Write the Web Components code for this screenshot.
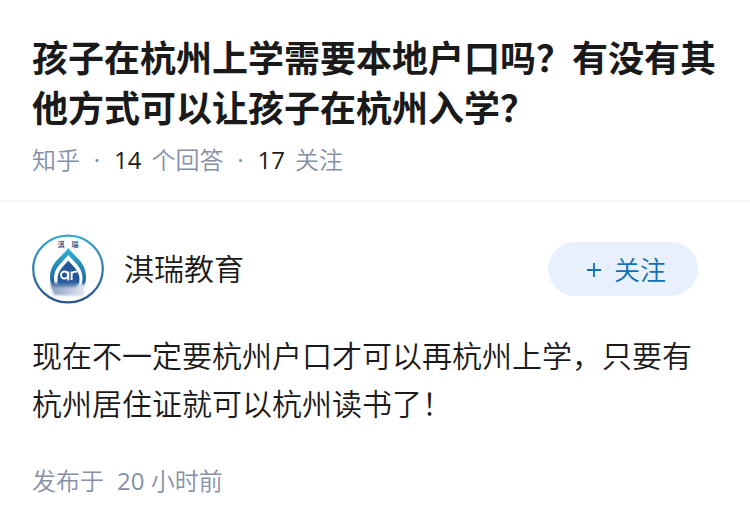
<!DOCTYPE html>
<html lang="zh-CN">
<head>
<meta charset="utf-8">
<meta name="viewport" content="width=device-width, initial-scale=1">
<title>知乎</title>
<style>
  body {
    margin: 0;
    background: #fff;
    color: #1a1a1a;
    font-family: "Open Sans", "Noto Sans CJK SC", sans-serif;
    font-weight: 350;
    --muted: #8590a6;
    --accent: #0f70b7;
    --gutter: 32px;
  }
  .count { font-weight: 400; }
</style>
</head>
<body>
<question-header answers="14" followers="17">
  孩子在杭州上学需要本地户口吗？有没有其他方式可以让孩子在杭州入学？
</question-header>
<answer-card>
  <author-bar slot="author" name="淇瑞教育"></author-bar>
  现在不一定要杭州户口才可以再杭州上学，只要有杭州居住证就可以杭州读书了！
  <span slot="time"><span class="count">20</span> 小时前</span>
</answer-card>

<script>
class QuestionHeader extends HTMLElement {
  constructor() {
    super();
    this.attachShadow({ mode: 'open' }).innerHTML = `
      <style>
        :host { display: block; padding: 31px var(--gutter) 23px; border-bottom: 2px solid #f6f6f6; }
        h1 { margin: 0; font: bold 36px/50px "Noto Sans CJK SC", sans-serif; }
        .meta { display: flex; gap: 10px; margin-top: 12px; font-size: 24px; line-height: 34px; color: var(--muted); }
        b { font-weight: 400; color: #1a1a1a; }
        .dot { width: 14px; text-align: center; font-weight: 400; }
      </style>
      <h1><slot></slot></h1>
      <div class="meta">
        <span>知乎</span><span class="dot">·</span>
        <b>${this.getAttribute('answers')}</b><span>个回答</span><span class="dot">·</span>
        <b>${this.getAttribute('followers')}</b><span>关注</span>
      </div>`;
  }
}

class BrandAvatar extends HTMLElement {
  constructor() {
    super();
    this.attachShadow({ mode: 'open' }).innerHTML = `
      <style>
        :host { display: block; flex: none; width: 72px; height: 70px; }
        svg { display: block; width: 100%; height: 100%; }
        text { font-family: "Noto Sans CJK SC", sans-serif; font-weight: bold; }
      </style>
      <svg viewBox="0 0 72 70" aria-hidden="true">
        <defs>
          <linearGradient id="ring" x1="0" y1="0" x2="0" y2="1">
            <stop offset="0" stop-color="#36a9cb"/><stop offset="1" stop-color="#29518d"/>
          </linearGradient>
          <linearGradient id="drop" x1="0" y1="0" x2="0" y2="1">
            <stop offset="0" stop-color="#2cb4d2"/><stop offset="1" stop-color="#1e5397"/>
          </linearGradient>
          <linearGradient id="haze" x1="0" y1="0" x2="1" y2="0">
            <stop offset="0" stop-color="#8a9fc2"/><stop offset=".5" stop-color="#b4c2d9"/><stop offset="1" stop-color="#e4e9f2"/>
          </linearGradient>
          <filter id="soft" x="-20%" y="-30%" width="140%" height="160%"><feGaussianBlur stdDeviation="1.3"/></filter>
        </defs>
        <ellipse cx="36" cy="35" rx="34.8" ry="33.4" fill="#fff" stroke="url(#ring)" stroke-width="2.2"/>
        <text x="25.5" y="13" font-size="7" fill="#315785">淇</text>
        <text x="39.5" y="13" font-size="7" fill="#315785">瑞</text>
        <path d="M36.3 14C31 22 18 28 18 43c0 6 2 10 5 13h26c3-3 5-7 5-13C54 28 42 22 36.3 14Z" fill="url(#drop)"/>
        <path d="M36.3 21C32 27 22 33 22 44c0 5 1 9 4 12h20c3-3 4.500-7 4.500-12C50.500 33 41 27 36.300 21Z" fill="#fff"/>
        <path d="M36.3 26.500C33 31 25.500 36 25.500 45c0 5 1 8 3 11h16c2-3 3-6 3-11C47.500 36 39.500 31 36.300 26.500Z" fill="#23599c"/>
        <circle cx="32.500" cy="41" r="3.500" fill="none" stroke="#fff" stroke-width="1.900"/>
        <path d="M36.300 37.500v9M39.600 46v-8.500M39.600 41c.3-3 3-4 5.400-3" fill="none" stroke="#fff" stroke-width="1.900"/>
        <path d="M18 50 53 50 52 62 22 61Z" fill="url(#haze)" filter="url(#soft)"/>
        <path d="M22 48h23v5H20Z" fill="#335f9e" opacity=".6" filter="url(#soft)"/>
      </svg>`;
  }
}

class FollowButton extends HTMLElement {
  constructor() {
    super();
    this.attachShadow({ mode: 'open' }).innerHTML = `
      <style>
        :host { display: block; margin-left: auto; margin-right: 20px; }
        button {
          display: flex; align-items: center; justify-content: center; gap: 13px;
          padding: 10px 32px 8px 39px; border: 0; border-radius: 27px;
          background: #e8f1fb; color: var(--accent);
          font: inherit; font-size: 26px; line-height: 36px; cursor: pointer;
        }
        svg { width: 14px; height: 14px; }
      </style>
      <button type="button">
        <svg viewBox="0 0 14 14" aria-hidden="true"><path d="M7 0v14M0 7h14" stroke="currentColor" stroke-width="1.8"/></svg>
        <span><slot></slot></span>
      </button>`;
  }
}

class AuthorBar extends HTMLElement {
  constructor() {
    super();
    this.attachShadow({ mode: 'open' }).innerHTML = `
      <style>
        :host { display: flex; align-items: center; gap: 20px; }
        .name { font-size: 30px; line-height: 48px; }
      </style>
      <brand-avatar></brand-avatar>
      <span class="name">${this.getAttribute('name')}</span>
      <follow-button>关注</follow-button>`;
  }
}

class AnswerCard extends HTMLElement {
  constructor() {
    super();
    this.attachShadow({ mode: 'open' }).innerHTML = `
      <style>
        :host { display: block; padding: 32px var(--gutter); }
        p { margin: 28px 0 36px; font-size: 30px; line-height: 48px; }
        footer { display: flex; gap: 13px; font-size: 24px; line-height: 34px; color: var(--muted); }
      </style>
      <slot name="author"></slot>
      <p><slot></slot></p>
      <footer><span>发布于</span><slot name="time"></slot></footer>`;
  }
}

customElements.define('question-header', QuestionHeader);
customElements.define('brand-avatar', BrandAvatar);
customElements.define('follow-button', FollowButton);
customElements.define('author-bar', AuthorBar);
customElements.define('answer-card', AnswerCard);
</script>
</body>
</html>
